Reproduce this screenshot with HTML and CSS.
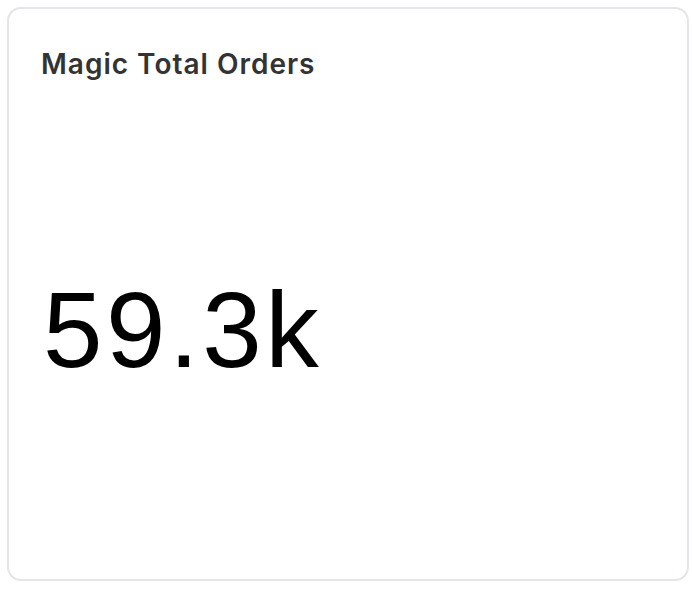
FILE: index.html
```html
<!doctype html>
<html lang="en">
  <head>
    <meta charset="UTF-8" />
    <meta name="viewport" content="width=device-width, initial-scale=1.0" />
    <title>Magic Total Orders</title>
    <link rel="stylesheet" href="styles.css">
  </head>
  <body>
    <div class="card">
      <h2 class="card-title">Magic Total Orders</h2>
      <div class="card-body">
        <span class="metric">59.3k</span>
      </div>
    </div>
  </body>
</html>
```

FILE: styles.css
```css
* {
  box-sizing: border-box;
}

body {
  margin: 0;
  padding: 7px;
  height: 100vh;
  background: #ffffff;
  font-family: Inter, "Noto Sans", sans-serif;
}

.card {
  height: 574px;
  width: 682px;
  border: 2px solid #e3e5e8;
  border-radius: 14px;
  padding: 33px 32px 34px;
  display: flex;
  flex-direction: column;
}

.card-title {
  margin: 0;
  font-size: 28px;
  font-weight: 600;
  line-height: 44px;
  color: #333333;
  letter-spacing: 1px;
}

.card-body {
  flex: 1;
  display: flex;
  align-items: center;
  padding-top: 30px;
}

.metric {
  margin-left: 2px;
  font-family: "Liberation Sans", Arial, sans-serif;
  font-size: 107px;
  line-height: 1;
  letter-spacing: 3.5px;
  color: #000000;
}
```
